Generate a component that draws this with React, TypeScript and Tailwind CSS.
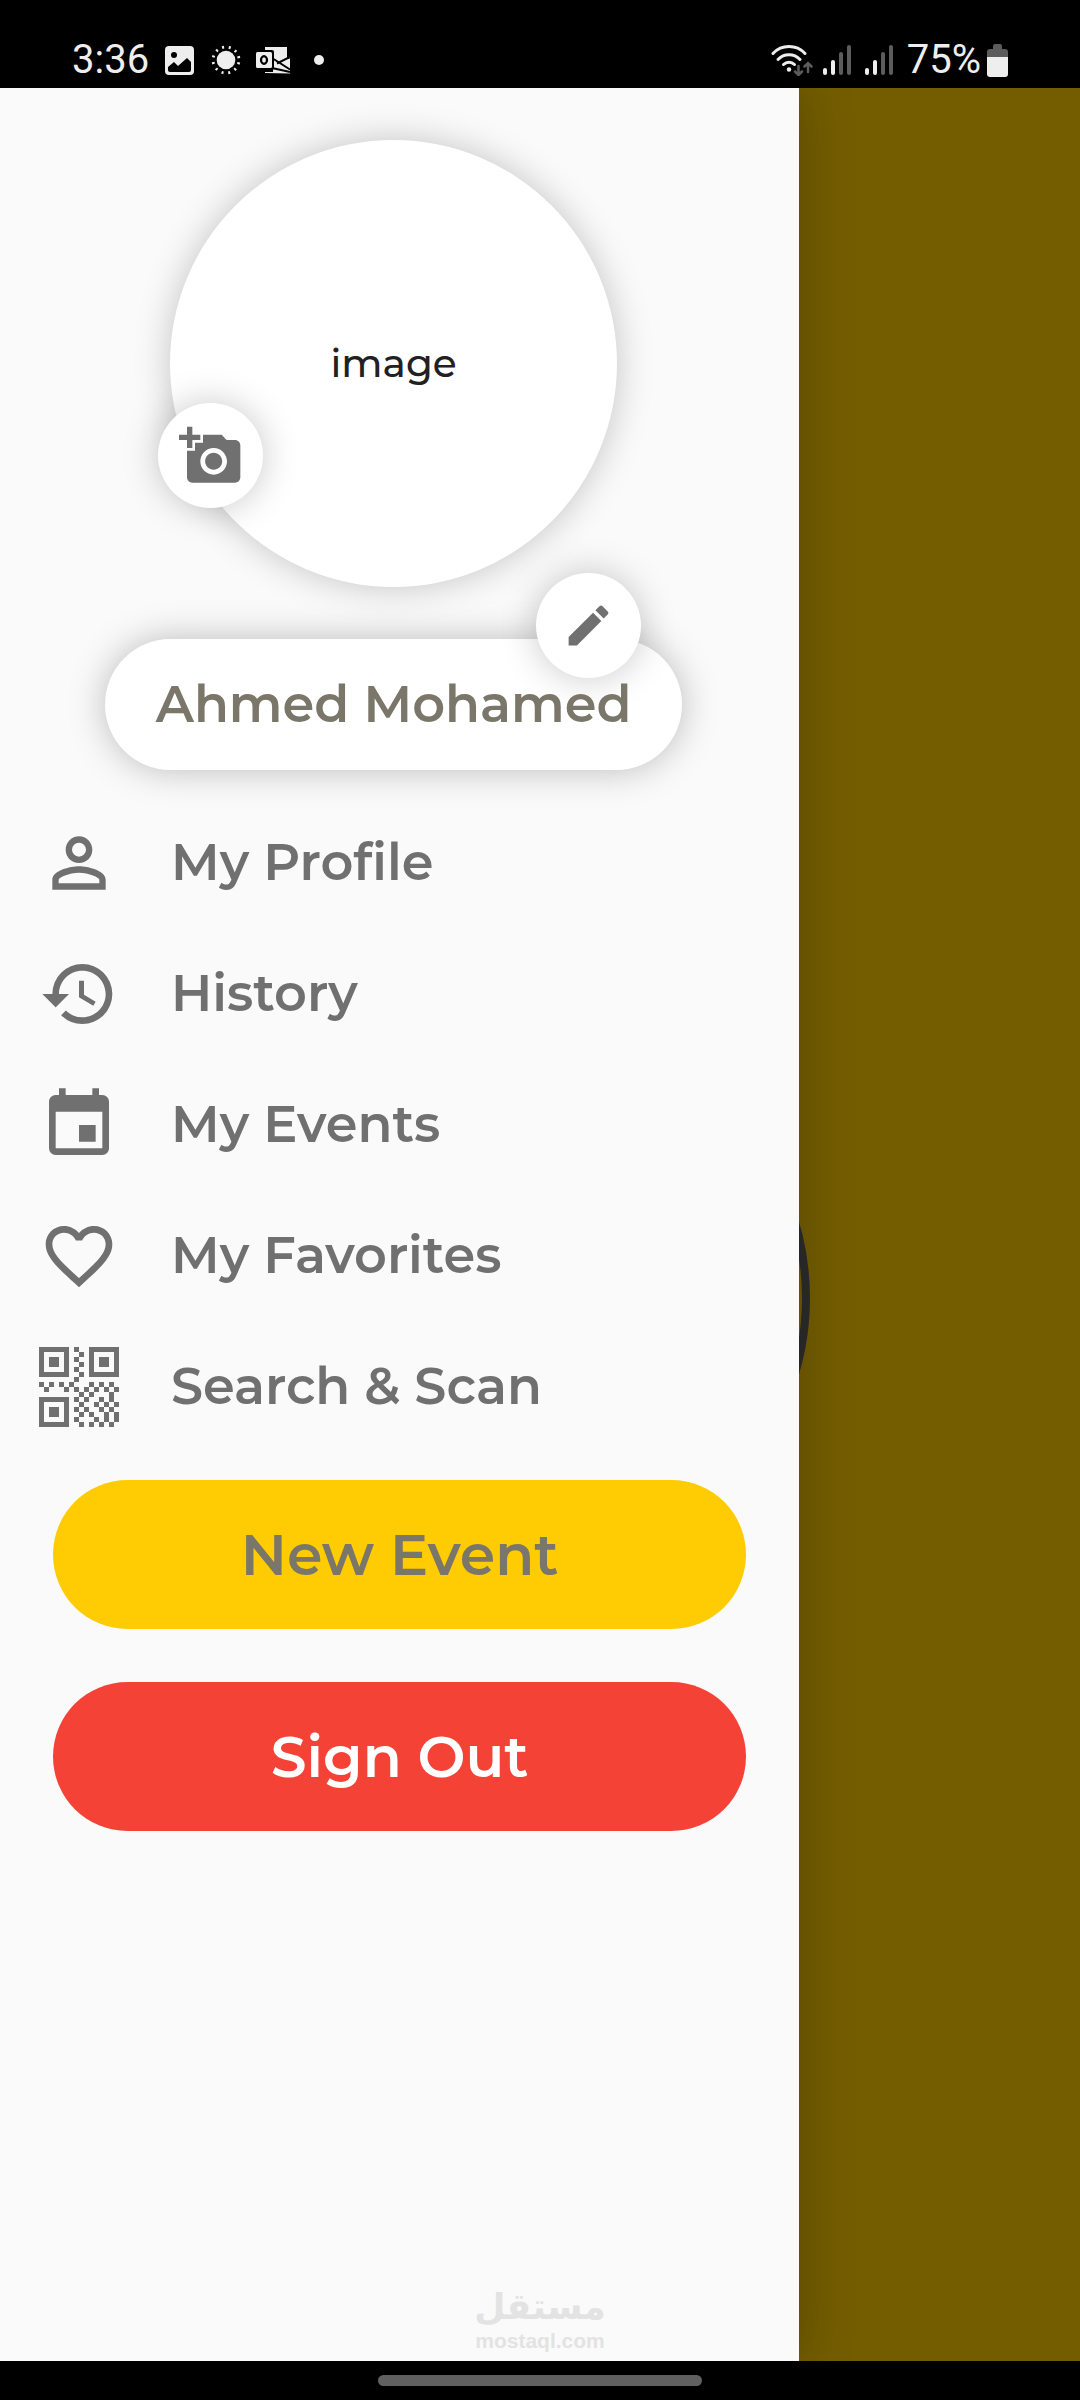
import React from 'react';
import {
    MdAddAPhoto,
    MdEdit,
    MdPersonOutline,
    MdHistory,
    MdEvent,
    MdFavoriteBorder
} from 'react-icons/md';

// One string per row, # is a filled module
const qrModules = [
    '.......#........',
    '........#.......',
    '.......#........',
    '........#.......',
    '.......#........',
    '........#.......',
    '.......#........',
    '#.#.#.#...#.#.#.',
    '.#...#.#.#.#.#.#',
    '........#.#...#.',
    '.......#.#..#.#.',
    '........#..#.#.#',
    '.......#.#..#.#.',
    '........#.#..#.#',
    '.......#...#.#.#',
    '........#.#.#.#.'
];

const QrIcon = () => (
    <svg viewBox="0 0 16 16" className="size-20" fill="currentColor" aria-hidden="true">
        {[[0, 0], [10, 0], [0, 10]].map(([x, y]) => (
            <g key={`${x}-${y}`}>
                <rect x={x + 0.5} y={y + 0.5} width="5" height="5" fill="none" stroke="currentColor" />
                <rect x={x + 2} y={y + 2} width="2" height="2" />
            </g>
        ))}
        {qrModules.map((row, y) =>
            row.split('').map((cell, x) =>
                cell === '#' ? <rect key={`${x}-${y}`} x={x} y={y} width="1" height="1" /> : null
            )
        )}
    </svg>
);

const SignalIcon = () => (
    <svg viewBox="0 0 28 30" className="h-[30px] w-7" aria-hidden="true">
        <rect x="0" y="23" width="4" height="7" rx="2" fill="#eee" />
        <rect x="8" y="15" width="4" height="15" rx="2" fill="#eee" />
        <rect x="16" y="7" width="4" height="23" rx="2" fill="#5c5c5c" />
        <rect x="24" y="0" width="4" height="30" rx="2" fill="#5c5c5c" />
    </svg>
);

const StatusBar = () => (
    <header className="flex h-[88px] items-center justify-between bg-black pt-8 pr-[72px] pl-[72px] font-['Roboto',sans-serif] text-[40px] leading-none font-normal text-[#eee]">
        <div className="flex items-center">
            <span>3:36</span>
            <svg viewBox="0 0 29 29" className="ml-4 size-[29px]" aria-hidden="true">
                <rect width="29" height="29" rx="4" fill="#eee" />
                <circle cx="9" cy="9" r="3" fill="#000" />
                <path d="M3 21l6-5 4 4 9-8 4 4v8a2 2 0 0 1-2 2H5a2 2 0 0 1-2-2z" fill="#000" />
            </svg>
            <svg viewBox="0 0 30 30" className="ml-[17px] size-[30px]" aria-hidden="true">
                <circle cx="15" cy="15" r="9.300" fill="#eee" />
                <circle cx="15" cy="15" r="13" fill="none" stroke="#eee" strokeWidth="2.800" strokeDasharray="2 4.807" strokeDashoffset="4.4" />
            </svg>
            <svg viewBox="0 0 36 28" className="ml-[14px] h-7 w-9" aria-hidden="true">
                <path d="M10 1h22v12l3-1.500v16L10 27z" fill="#eee" />
                <path d="M17 12l18 11.500M36 10.500L22 17.500M17 22l18 4" stroke="#000" strokeWidth="2" />
                <path d="M32 0h4v12l-4 1z" fill="#000" />
                <path d="M9 23h9v3h-9z" fill="#000" />
                <rect x="-1" y="4" width="20" height="20" rx="2" fill="#000" />
                <rect x="1" y="6" width="16" height="16" rx="1.500" fill="#eee" />
                <ellipse cx="9" cy="14" rx="3" ry="3.800" fill="none" stroke="#000" strokeWidth="2.200" />
            </svg>
            <span className="ml-[23px] size-[10px] rounded-full bg-[#eee]" />
        </div>
        <div className="flex items-center">
            <svg viewBox="0 0 42 32" className="h-8 w-[42px]" fill="none" strokeLinecap="round" aria-hidden="true">
                <g stroke="#eee" strokeWidth="3">
                    <path d="M2 9.500a22 22 0 0 1 32 0" />
                    <path d="M7 15.500a15 15 0 0 1 22 0" />
                    <path d="M12.500 20.500a8 8 0 0 1 11 0" />
                </g>
                <circle cx="18" cy="25.500" r="2.200" fill="#eee" />
                <g stroke="#5c5c5c" strokeWidth="2.500">
                    <path d="M27.500 22v9M24 27.500l3.500 3.500 3.500-3.500" />
                    <path d="M37 28v-9M33.500 22.500L37 19l3.500 3.500" />
                </g>
            </svg>
            <div className="ml-[10px] flex gap-[14px]">
                <SignalIcon />
                <SignalIcon />
            </div>
            <span className="ml-[14px]">75%</span>
            <svg viewBox="0 0 21 33" className="ml-[6px] h-[33px] w-[21px]" aria-hidden="true">
                <path d="M6 2a2 2 0 0 1 2-2h5a2 2 0 0 1 2 2v3h3a3 3 0 0 1 3 3v5H0V8a3 3 0 0 1 3-3h3z" fill="#5c5c5c" />
                <path d="M0 13h21v17a3 3 0 0 1-3 3H3a3 3 0 0 1-3-3z" fill="#eee" />
            </svg>
        </div>
    </header>
);

const menuItems = [
    { name: 'My Profile', icon: <MdPersonOutline size={80} /> },
    { name: 'History', icon: <MdHistory size={80} /> },
    { name: 'My Events', icon: <MdEvent size={80} /> },
    { name: 'My Favorites', icon: <MdFavoriteBorder size={80} /> },
    { name: 'Search & Scan', icon: <QrIcon /> }
];

const App = () => {
    return (
        <div className="flex min-h-screen flex-col bg-black font-['Montserrat','Inter',sans-serif] font-semibold">
            <StatusBar />
            <main className="relative flex flex-1 overflow-hidden bg-[#745d00]">
                {/* Page behind the drawer */}
                <div className="absolute inset-0 flex items-center justify-center pt-[146px]">
                    <div className="size-[540px] rounded-full border-8 border-[#2c2c2c]" />
                </div>

                <aside className="relative flex w-[74%] flex-col bg-[#fafafa] shadow-[0_0_50px_rgba(0,0,0,0.25)]">
                    <div className="flex flex-col items-center pt-[52px] pr-3">
                        <div className="relative flex size-[447px] items-center justify-center rounded-full bg-white text-[39px] font-medium text-[#212121] shadow-[0_0_36px_rgba(0,0,0,0.22)]">
                            image
                            <button
                                aria-label="Add photo"
                                className="absolute top-[263px] -left-3 flex size-[105px] items-center justify-center rounded-full bg-white text-[#707070] shadow-[0_0_36px_rgba(0,0,0,0.22)]"
                            >
                                <MdAddAPhoto size={64} />
                            </button>
                        </div>
                        <div className="relative mt-[52px] flex h-[131px] w-[577px] items-center justify-center rounded-full bg-white text-[51px] text-[#7a766a] shadow-[0_0_36px_rgba(0,0,0,0.25)]">
                            <button
                                aria-label="Edit name"
                                className="absolute -top-[66px] right-[41px] flex size-[105px] items-center justify-center rounded-full bg-white text-[#707070] shadow-[0_0_36px_rgba(0,0,0,0.22)]"
                            >
                                <MdEdit size={53} />
                            </button>
                            <span className="relative">Ahmed Mohamed</span>
                        </div>
                    </div>

                    <nav className="mt-[27px] text-[51px] text-[#707070]">
                        {menuItems.map((item) => (
                            <a key={item.name} href="#" className="flex h-[131px] items-center gap-[52px] pl-[39px]">
                                {item.icon}
                                <span>{item.name}</span>
                            </a>
                        ))}
                    </nav>

                    <div className="mt-[28px] flex flex-col gap-[53px] px-[53px] text-[57px]">
                        <button className="h-[149px] rounded-full bg-[#ffcc03] text-[#7a766a]">New Event</button>
                        <button className="h-[149px] rounded-full bg-[#f44336] text-white">Sign Out</button>
                    </div>
                </aside>

                {/* Watermark */}
                <div className="absolute inset-x-0 bottom-2 flex flex-col items-center text-[#e3e3e3]">
                    <span lang="ar" dir="rtl" className="font-['DejaVu_Sans',sans-serif] text-[36px] leading-[44px] font-bold">مستقل</span>
                    <span className="font-['Liberation_Sans',sans-serif] text-[21px] leading-6 font-bold">mostaql.com</span>
                </div>
            </main>
            <footer className="flex h-[39px] items-center justify-center bg-black">
                <div className="h-[11px] w-[30%] rounded-full bg-[#606060]" />
            </footer>
        </div>
    );
};

export default App;
